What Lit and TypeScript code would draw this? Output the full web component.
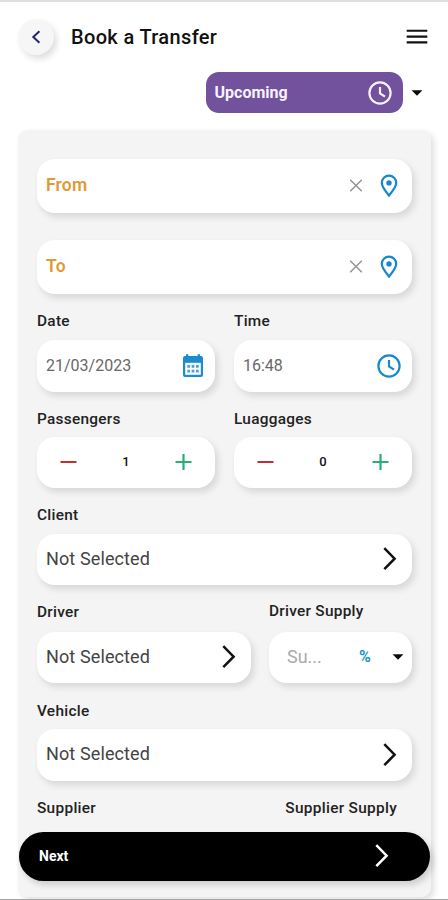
import { LitElement, html, css, svg } from "lit";
import { customElement, property } from "lit/decorators.js";

const icons: Record<string, unknown> = {
  back: svg`<svg width="10" height="14" viewBox="0 0 10 14" fill="none" stroke="#26217c" stroke-width="2"><path d="M8.400 1.200 2.300 7l6.100 5.800"/></svg>`,
  menu: svg`<svg width="22" height="16" viewBox="0 0 22 16" stroke="#111" stroke-width="2.100"><path d="M.7 1.800h20.600M.7 7.600h20.600M.7 13.400h20.600"/></svg>`,
  caret: svg`<svg width="12" height="6" viewBox="0 0 12 6"><path d="M.6.2h10.800L6 5.800z" fill="#0c0c0c"/></svg>`,
  clear: svg`<svg width="14" height="14" viewBox="0 0 14 14" stroke="#929292" stroke-width="1.400"><path d="m1.200.7 11.600 11.600M12.800.7 1.200 12.300"/></svg>`,
  pin: svg`<svg width="18" height="24" viewBox="0 0 18 24"><path d="M9 1.600a7.200 7.200 0 0 0-7.200 7.200C1.800 13.500 6.600 18.300 9 21.500c2.400-3.200 7.200-8 7.200-12.700A7.200 7.200 0 0 0 9 1.600z" fill="none" stroke="#1688cb" stroke-width="2.200"/><circle cx="9" cy="8.900" r="2.700" fill="#1688cb"/></svg>`,
  calendar: svg`<svg width="22" height="24" viewBox="0 0 22 24"><path d="M3 2h1V.3h2.400V2h9.200V.3H18V2h1a2 2 0 0 1 2 2v17a2 2 0 0 1-2 2H3a2 2 0 0 1-2-2V4a2 2 0 0 1 2-2z" fill="#1b8cd2"/><path d="M3.200 8.800h15.600v12H3.200z" fill="#fff"/><path d="M5.300 11h2.800v2.800H5.300zm4.300 0h2.800v2.800H9.600zm4.300 0h2.800v2.800h-2.800zm-8.600 4.800h2.800v2.800H5.300zm4.300 0h2.800v2.800H9.600zm4.300 0h2.800v2.800h-2.800z" fill="#4ba3d8"/></svg>`,
  clock: svg`<svg width="24" height="24" viewBox="0 0 24 24" fill="none" stroke="currentColor" stroke-width="2.200"><circle cx="12" cy="12" r="10.600"/><path d="M12 6v6.300l5 3.400"/></svg>`,
  minus: svg`<svg width="17" height="17" viewBox="0 0 17 17" stroke="#c32f2c" stroke-width="2"><path d="M.5 8h16"/></svg>`,
  plus: svg`<svg width="17" height="17" viewBox="0 0 17 17" stroke="#2bae78" stroke-width="2.200"><path d="M.5 8h16M8.500 0v16"/></svg>`,
  next: svg`<svg width="14" height="24" viewBox="0 0 14 24" fill="none" stroke="currentColor" stroke-width="2.500"><path d="M1.300 1.200 11.600 11.700 1.300 22.200"/></svg>`,
};

@customElement("form-field")
class FormField extends LitElement {
  @property() label = "";

  static styles = css`
    :host { display: flex; flex-direction: column; min-width: 0; }
    .label {
      height: var(--label-height, 46px);
      box-sizing: border-box;
      padding-bottom: var(--label-gap, 10px);
      display: flex;
      align-items: flex-end;
      font-size: 15.400px;
      font-weight: 500;
      line-height: 18px;
      letter-spacing: 0.270px;
      color: #222;
      white-space: nowrap;
    }
    .card {
      height: var(--card-height, 51px);
      box-sizing: border-box;
      display: flex;
      align-items: center;
      padding: var(--card-padding, 0 15px 0 9px);
      border-radius: 18px;
      background: #fff;
      box-shadow: 3px 4px 7px rgba(0, 0, 0, 0.12);
      white-space: nowrap;
    }
  `;

  render() {
    return html`
      ${this.label ? html`<div class="label">${this.label}</div>` : null}
      <div class="card"><slot></slot></div>
    `;
  }
}

@customElement("app-root")
class AppRoot extends LitElement {
  static styles = css`
    :host {
      display: block;
      position: relative;
      box-sizing: border-box;
      height: 900px;
      overflow: hidden;
      background: #fff;
      border-top: 2px solid #e0e0e0;
      border-bottom: 1px solid #a5a5a5;
      font-family: Roboto, "Liberation Sans", sans-serif;
      color: #111;
    }
    svg { display: block; flex: none; }
    .header { display: flex; align-items: center; height: 70px; padding: 0 20.500px 0 18px; }
    .back {
      width: 36px; height: 36px; border-radius: 50%;
      display: flex; align-items: center; justify-content: center;
      background: #f6f6f6;
      box-shadow: 3px 4px 6px rgba(0, 0, 0, 0.13);
    }
    h1 { flex: 1; margin: 0 0 0 17px; font-size: 20px; font-weight: 500; letter-spacing: 0.350px; line-height: 24px; }
    .status { display: flex; justify-content: flex-end; align-items: center; gap: 8px; padding-right: 25px; }
    .upcoming {
      width: 197.500px; height: 41px; box-sizing: border-box;
      display: flex; align-items: center; justify-content: space-between;
      padding: 0 11px 0 9px;
      border-radius: 13px;
      background: #72519d;
      color: #f7f2fb;
      font-size: 16px; font-weight: 700;
    }
    .panel {
      box-sizing: border-box;
      height: 767px;
      margin: 17px 17px 0 18px;
      padding: 29px 19px 0 19px;
      border-radius: 9px;
      background: #f4f4f4;
      box-shadow: 3px 3px 6px rgba(0, 0, 0, 0.13);
    }
    .from, .to { --card-height: 53.500px; }
    .to { margin-top: 27.500px; }
    .row { display: grid; grid-template-columns: 1fr 1fr; column-gap: 19px; }
    .when { --label-height: 46px; --card-height: 52px; --card-padding: 0 11px 0 9px; }
    .counts { --label-height: 45px; --label-gap: 8.500px; --card-padding: 0 23px; }
    .driver { grid-template-columns: 214px 1fr; column-gap: 18px; --label-height: 47px; --label-gap: 10.500px; }
    .supply { --card-padding: 0 8px 0 18px; --label-gap: 11.500px; }
    .vehicle { --label-height: 46px; --label-gap: 9px; --card-height: 52px; }
    .place { flex: 1; color: #e09a35; font-size: 17.500px; font-weight: 600; line-height: 20px; padding-bottom: 1px; letter-spacing: 0.200px; }
    .pin { margin: 0 -1px 0 17px; }
    .value { flex: 1; color: #686868; font-size: 16px; letter-spacing: 0; line-height: 20px; }
    .choice { flex: 1; color: #444; font-size: 18px; letter-spacing: 0.120px; line-height: 20px; padding-bottom: 1px; }
    .blue { color: #1688cb; }
    .count { flex: 1; text-align: center; font-size: 13px; font-weight: 500; padding-bottom: 1px; }
    .hint { color: #aaa; font-size: 18px; line-height: 20px; padding-bottom: 1px; }
    .percent { flex: 1; text-align: center; padding: 0 0 1px 16px; color: #1597ca; font-size: 16px; font-weight: 700; }
    .labels {
      display: flex; justify-content: space-between; padding: 18px 15px 0 0;
      font-size: 15.400px; font-weight: 500; line-height: 18px; letter-spacing: 0.300px; color: #222;
    }
    .next {
      position: absolute; left: 19px; right: 18px; bottom: 18px;
      height: 49.500px; box-sizing: border-box;
      display: flex; align-items: center; justify-content: space-between;
      padding: 0 41px 0 20px;
      border-radius: 25px;
      background: #000; color: #fff;
      font-size: 14px; font-weight: 700;
      box-shadow: 3px 4px 6px rgba(0, 0, 0, 0.16);
    }
  `;

  private place(name: string, cls: string) {
    return html`<form-field class=${cls}>
      <span class="place">${name}</span>${icons.clear}<span class="pin">${icons.pin}</span>
    </form-field>`;
  }

  private counter(label: string, count: number) {
    return html`<form-field label=${label}>
      ${icons.minus}<span class="count">${count}</span>${icons.plus}
    </form-field>`;
  }

  private select(label: string, cls: string) {
    return html`<form-field class=${cls} label=${label}>
      <span class="choice">Not Selected</span>${icons.next}
    </form-field>`;
  }

  render() {
    return html`
      <div class="header">
        <div class="back">${icons.back}</div>
        <h1>Book a Transfer</h1>
        ${icons.menu}
      </div>
      <div class="status">
        <div class="upcoming">Upcoming ${icons.clock}</div>
        ${icons.caret}
      </div>
      <div class="panel">
        ${this.place("From", "from")} ${this.place("To", "to")}
        <div class="row when">
          <form-field label="Date"><span class="value">21/03/2023</span>${icons.calendar}</form-field>
          <form-field label="Time"><span class="value">16:48</span><span class="blue">${icons.clock}</span></form-field>
        </div>
        <div class="row counts">${this.counter("Passengers", 1)} ${this.counter("Luaggages", 0)}</div>
        ${this.select("Client", "client")}
        <div class="row driver">
          ${this.select("Driver", "")}
          <form-field class="supply" label="Driver Supply">
            <span class="hint">Su...</span><span class="percent">%</span>${icons.caret}
          </form-field>
        </div>
        ${this.select("Vehicle", "vehicle")}
        <div class="labels"><span>Supplier</span><span>Supplier Supply</span></div>
      </div>
      <div class="next">Next ${icons.next}</div>
    `;
  }
}
